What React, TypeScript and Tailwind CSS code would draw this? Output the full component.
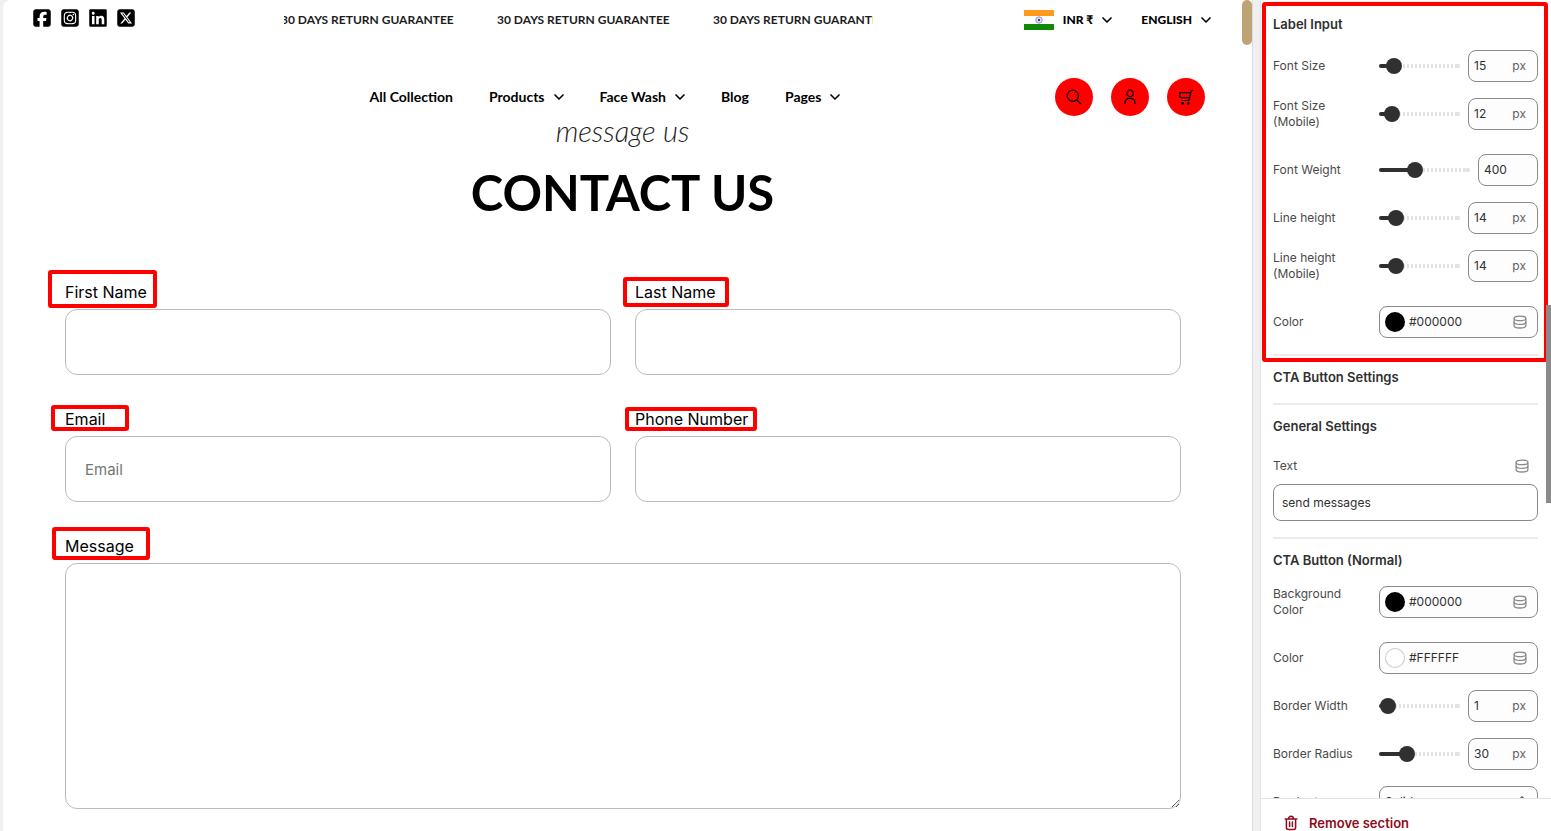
import React, { useState } from 'react';
import { ChevronDown, ChevronsUpDown } from 'lucide-react';
import { FaSquareFacebook, FaSquareInstagram, FaLinkedin, FaSquareXTwitter } from 'react-icons/fa6';

const socials = [
  { label: 'Facebook', Icon: FaSquareFacebook },
  { label: 'Instagram', Icon: FaSquareInstagram },
  { label: 'LinkedIn', Icon: FaLinkedin },
  { label: 'X', Icon: FaSquareXTwitter },
];

const navItems = [
  { label: 'All Collection', menu: false },
  { label: 'Products', menu: true },
  { label: 'Face Wash', menu: true },
  { label: 'Blog', menu: false },
  { label: 'Pages', menu: true },
];

const Highlight = ({ className }: { className: string }) => (
  <span className={`pointer-events-none absolute rounded-[3px] border-4 border-[#ff0000] ${className}`} />
);

const IndiaFlag = () => (
  <svg viewBox="0 0 30 20" className="h-5 w-[30px]" aria-hidden="true">
    <rect width="30" height="20" fill="#fff" />
    <rect width="30" height="6" fill="#ff9a1c" />
    <rect y="14" width="30" height="6" fill="#128807" />
    <circle cx="15" cy="10" r="3.2" fill="#e6e6f5" stroke="#7a7ab8" strokeWidth="0.8" />
    <circle cx="15" cy="10" r="1.2" fill="#3c3c96" />
  </svg>
);

const DatabaseIcon = () => (
  <svg viewBox="0 0 16 16" className="size-4" fill="none" stroke="#8a8a8a" strokeWidth="1.3" aria-hidden="true">
    <path d="M8 2.1c3.400 0 5.900.9 5.900 2.300S11.400 6.700 8 6.700 2.100 5.800 2.100 4.400 4.600 2.100 8 2.100z" />
    <path d="M2.100 4.400v7c0 1.600 2.500 2.600 5.900 2.600s5.900-1 5.900-2.600v-7" />
    <path d="M2.100 7.900c0 1.500 2.500 2.400 5.900 2.400s5.900-.9 5.900-2.400" />
  </svg>
);

const TrashIcon = () => (
  <svg viewBox="0 0 16 16" className="size-4" fill="none" stroke="#8e0b21" strokeWidth="1.5" strokeLinecap="round" aria-hidden="true">
    <path d="M2.2 4h11.6M5.6 3.8C5.6 2.3 6.6 1.3 8 1.3s2.4 1 2.4 2.5M3.4 4.2v8.3c0 1.2.8 2 2 2h5.2c1.2 0 2-.8 2-2V4.2M6.6 7v4.6M9.4 7v4.6" />
  </svg>
);

const roundButtons = [
  {
    label: 'Search',
    icon: (
      <>
        <circle cx="6.8" cy="6.8" r="5.6" />
        <path d="M10.8 10.8l4.2 4.2" />
      </>
    ),
  },
  {
    label: 'Account',
    icon: (
      <>
        <circle cx="8" cy="4.4" r="3.2" />
        <path d="M3 15v-1.3c0-2.6 2-4.4 5-4.4s5 1.8 5 4.4V15" />
      </>
    ),
  },
  {
    label: 'Cart',
    icon: (
      <>
        <path d="M15.2 1.5h-2l-2 10H3.2M12.8 3.6H1.6v3.2c0 1.2.7 1.9 1.9 1.9h8.2" />
        <path d="M3.6 13.6h1.8v1.6H3.6zM9.4 13.6h1.8v1.6H9.4z" fill="#000" strokeWidth="0.6" />
      </>
    ),
  },
];

const StoreHeader = () => (
  <header className="font-['Lato','Open_Sans',sans-serif] text-black">
    <div className="grid h-10 grid-cols-[252px_1fr_339px] items-center pr-[30px] pl-[29px]">
      <div className="flex gap-2">
        {socials.map(({ label, Icon }) => (
          <a key={label} href="#" aria-label={label} className="-mt-[5px]">
            <Icon className="size-5" />
          </a>
        ))}
      </div>
      <div className="overflow-hidden">
        <div className="-ml-[3px] flex text-xs font-bold text-[#1c1c1c]">
          {[0, 1, 2].map((i) => (
            <span key={i} className="w-[216px] shrink-0 whitespace-nowrap">30 DAYS RETURN GUARANTEE</span>
          ))}
        </div>
      </div>
      <div className="-mr-0.5 flex items-center justify-end text-xs font-black">
        <IndiaFlag />
        <button type="button" className="ml-[9px] flex items-center gap-1.5">
          INR ₹ <ChevronDown className="size-4" strokeWidth={2.5} />
        </button>
        <button type="button" className="ml-[26px] flex items-center gap-1.5">
          ENGLISH <ChevronDown className="size-4" strokeWidth={2.5} />
        </button>
      </div>
    </div>
    <div className="mt-[38px] grid grid-cols-[123px_1fr_150px] items-center pr-[37px] pl-[29px]">
      <nav className="col-start-2 flex justify-center gap-9 text-sm font-bold">
        {navItems.map(({ label, menu }) => (
          <a key={label} href="#" className="flex items-center gap-1.5 whitespace-nowrap">
            {label}
            {menu && <ChevronDown className="-mr-[3px] size-4" strokeWidth={2.5} />}
          </a>
        ))}
      </nav>
      <div className="flex justify-end gap-[18px]">
        {roundButtons.map(({ label, icon }) => (
          <button key={label} type="button" aria-label={label} className="flex size-[38px] items-center justify-center rounded-full bg-[#ff0000]">
            <svg viewBox="0 0 16 16" className="size-4" fill="none" stroke="#000" strokeWidth="1.2">
              {icon}
            </svg>
          </button>
        ))}
      </div>
    </div>
  </header>
);

interface FieldProps {
  id: string;
  label: string;
  highlight: string;
  type?: string;
  placeholder?: string;
}

const Field = ({ id, label, highlight, type = 'text', placeholder }: FieldProps) => (
  <div>
    <label htmlFor={id} className="relative mb-[5px] block text-base leading-6 text-black">
      {label}
      <Highlight className={highlight} />
    </label>
    <input id={id} type={type} placeholder={placeholder} className="block h-[66px] w-full rounded-xl border border-[#bfb9b9] px-[19px] text-[15px] outline-none placeholder:text-[#757575]" />
  </div>
);

const ContactForm = () => (
  <main>
    <div className="text-center text-black">
      <p className="font-['Lato','Liberation_Serif',sans-serif] text-[29px] leading-[30px] font-light text-[#222] italic">message us</p>
      <h1 className="mt-4 font-['Lato','Open_Sans',sans-serif] text-[49px] leading-[60px] font-bold">CONTACT US</h1>
    </div>
    <form className="mt-[58px] grid grid-cols-2 gap-x-6 gap-y-8 pr-[61px] pl-[62px] font-['Inter',sans-serif]">
      <Field id="first-name" label="First Name" highlight="-top-[10px] -left-[17px] h-[38px] w-[109px]" />
      <Field id="last-name" label="Last Name" highlight="-top-[3px] -left-3 h-[30px] w-[106px]" />
      <Field id="email" label="Email" type="email" placeholder="Email" highlight="-top-[2px] -left-[14px] h-[26px] w-[78px]" />
      <Field id="phone" label="Phone Number" type="tel" highlight="top-0 -left-[10px] h-6 w-[132px]" />
      <div className="col-span-2">
        <label htmlFor="message" className="relative mb-[5px] block text-base leading-6 text-black">
          Message
          <Highlight className="-top-[7px] -left-[13px] h-[33px] w-[98px]" />
        </label>
        <textarea id="message" className="block h-[246px] w-full resize rounded-xl border border-[#bfb9b9] px-[19px] py-4 text-[15px] outline-none" />
      </div>
    </form>
  </main>
);

interface SliderRowProps {
  label: string;
  min?: number;
  max: number;
  value: number;
  unit?: string;
}

const SliderRow = ({ label, min = 0, max, value: initial, unit }: SliderRowProps) => {
  const [value, setValue] = useState(initial);
  const id = label.toLowerCase().replace(/[^a-z]+/g, '-');
  const percent = ((value - min) / (max - min)) * 100;

  return (
    <div className="flex h-8 items-center">
      <label htmlFor={id} className="w-[106px] shrink-0 pr-5 leading-4 text-[#4a4a4a]">{label}</label>
      <div className="relative flex h-4 min-w-0 flex-1 items-center">
        <div className="h-1 w-full rounded-full bg-[repeating-linear-gradient(90deg,#e3e3e3_0_2px,transparent_2px_4px)]" />
        <span className="absolute right-0 h-1 w-[5px] rounded-full bg-[#e3e3e3]" />
        <span className="absolute left-0 h-1 min-w-2 rounded-full bg-[#303030]" style={{ width: `${percent}%` }} />
        <input
          type="range"
          aria-label={`${label} slider`}
          min={min}
          max={max}
          value={value}
          onChange={(e) => setValue(Number(e.target.value))}
          className="absolute inset-0 h-4 w-full appearance-none bg-transparent [&::-webkit-slider-thumb]:size-4 [&::-webkit-slider-thumb]:appearance-none [&::-webkit-slider-thumb]:rounded-full [&::-webkit-slider-thumb]:bg-[#303030]"
        />
      </div>
      <div className={`ml-2 flex h-8 shrink-0 items-center rounded-lg border border-[#8a8a8a] bg-[#fdfdfd] pr-[11px] pl-[5px] ${unit ? 'w-[70px]' : 'w-[60px]'}`}>
        <input id={id} value={value} onChange={(e) => setValue(Number(e.target.value) || 0)} className="w-full min-w-0 bg-transparent text-[#303030] outline-none" />
        {unit && <span className="text-[#616161]">{unit}</span>}
      </div>
    </div>
  );
};

const ColorRow = ({ id, label, value }: { id: string; label: string; value: string }) => (
  <div className="flex h-8 items-center">
    <label htmlFor={id} className="w-[106px] shrink-0 pr-5 leading-4 text-[#4a4a4a]">{label}</label>
    <div className="flex h-8 min-w-0 flex-1 items-center rounded-lg border border-[#8a8a8a] bg-[#fdfdfd] pr-[9px] pl-[5px]">
      <span className="size-5 shrink-0 rounded-full border border-black/20" style={{ backgroundColor: value }} />
      <input id={id} defaultValue={value} className="ml-1 w-full min-w-0 bg-transparent text-[#303030] outline-none" />
      <button type="button" aria-label={`Connect ${label} to a dynamic source`}>
        <DatabaseIcon />
      </button>
    </div>
  </div>
);

const Section = ({ title, children }: { title: string; children?: React.ReactNode }) => (
  <section className="mb-4 border-t-2 border-[#ebebeb] pt-[11px]">
    <h2 className="text-[13px] leading-5 font-semibold text-[#303030]">{title}</h2>
    {children}
  </section>
);

const SettingsPanel = () => (
  <aside className="relative flex w-[291px] shrink-0 flex-col border-l border-[#e3e3e3] bg-white font-['Inter',sans-serif] text-xs">
    <div className="min-h-0 flex-1 overflow-hidden pt-px pr-[13px] pl-3">
      <Section title="Label Input">
        <div className="mt-4 flex flex-col gap-4">
          <SliderRow label="Font Size" min={6} max={86} value={15} unit="px" />
          <SliderRow label="Font Size (Mobile)" min={6} max={86} value={12} unit="px" />
        </div>
        <div className="mt-6 flex flex-col gap-4">
          <SliderRow label="Font Weight" min={100} max={900} value={400} />
          <SliderRow label="Line height" max={100} value={14} unit="px" />
          <SliderRow label="Line height (Mobile)" max={100} value={14} unit="px" />
        </div>
        <div className="mt-6">
          <ColorRow id="label-color" label="Color" value="#000000" />
        </div>
      </Section>
      <Section title="CTA Button Settings" />
      <Section title="General Settings">
        <div className="mt-5 flex items-center justify-between pr-2">
          <label htmlFor="cta-text" className="leading-5 text-[#4a4a4a]">Text</label>
          <button type="button" aria-label="Connect Text to a dynamic source">
            <DatabaseIcon />
          </button>
        </div>
        <input id="cta-text" defaultValue="send messages" className="mt-2 block h-[37px] w-full rounded-lg border border-[#8a8a8a] bg-white px-2 text-[#303030] outline-none" />
      </Section>
      <Section title="CTA Button (Normal)">
        <div className="mt-4 flex flex-col gap-6">
          <ColorRow id="cta-background" label="Background Color" value="#000000" />
          <ColorRow id="cta-color" label="Color" value="#FFFFFF" />
        </div>
        <div className="mt-4 flex flex-col gap-4">
          <SliderRow label="Border Width" max={50} value={1} unit="px" />
          <SliderRow label="Border Radius" max={100} value={30} unit="px" />
          <div className="flex h-8 items-center">
            <label htmlFor="border-type" className="w-[106px] shrink-0 text-[#4a4a4a]">Border type</label>
            <div className="relative flex flex-1 items-center">
              <select id="border-type" className="h-8 w-full appearance-none rounded-lg border border-[#8a8a8a] bg-[#fdfdfd] px-[5px] text-[#303030]">
                <option>Solid</option>
                <option>Dashed</option>
              </select>
              <ChevronsUpDown className="pointer-events-none absolute right-2 size-4 text-[#6a6a6a]" />
            </div>
          </div>
        </div>
      </Section>
    </div>
    <footer className="h-[33px] shrink-0 overflow-hidden border-t border-[#e3e3e3] pt-[14px] pl-[22px]">
      <button type="button" className="flex h-5 items-center gap-[10px] text-[13px] leading-5 font-semibold text-[#8e0b21]">
        <TrashIcon />
        Remove section
      </button>
    </footer>
    <Highlight className="top-[2px] left-px h-[360px] w-[286px]" />
    <span className="absolute top-[305px] right-0 h-[198px] w-[5px] bg-[#8a8a8a]" />
  </aside>
);

const App: React.FC = () => (
  <div className="flex h-screen gap-[7px] overflow-hidden bg-[#f0f0f0] pl-[3px]">
    <div className="flex min-w-0 flex-1 overflow-hidden rounded-tl-lg border-r border-[#dcdcdc] bg-white">
      <div className="min-w-0 flex-1">
        <StoreHeader />
        <ContactForm />
      </div>
      <div className="w-[10px] shrink-0">
        <div className="h-[45px] rounded-full bg-[#bda375]" />
      </div>
    </div>
    <SettingsPanel />
  </div>
);

export default App;
